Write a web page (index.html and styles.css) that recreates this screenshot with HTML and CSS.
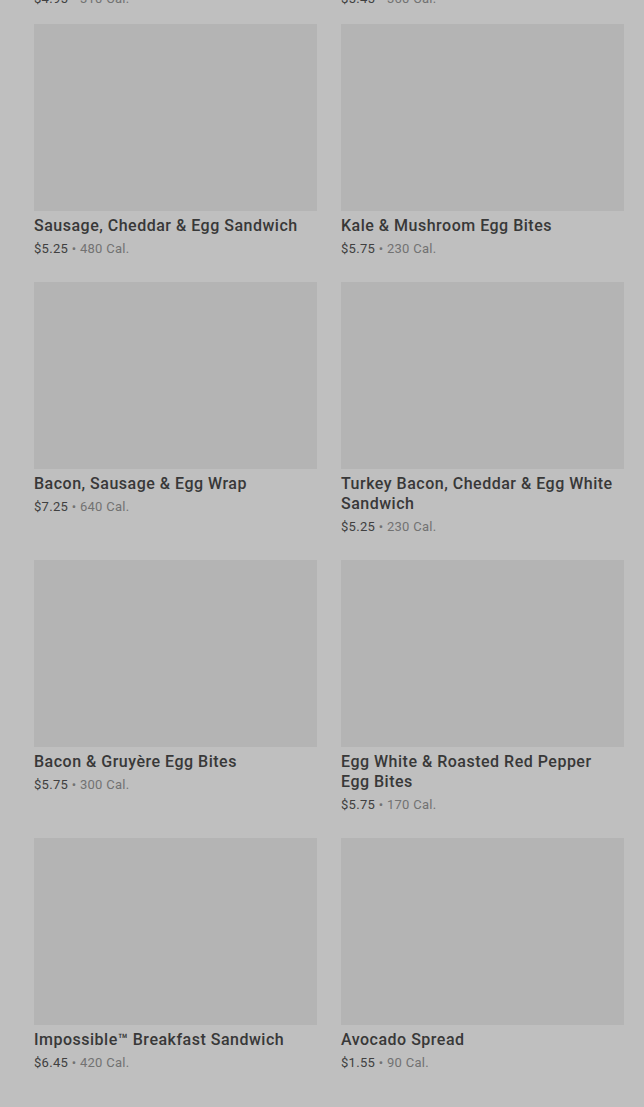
FILE: index.html
```html
<!DOCTYPE html>
<html>
<head>
  <meta charset="UTF-8">
  <link rel="stylesheet" href="styles.css">
</head>
<body>
  <div class="page">
    <div class="tail">
      <div class="price">$4.95 <span class="cal">&bull; 310 Cal.</span></div>
      <div class="price">$5.45 <span class="cal">&bull; 360 Cal.</span></div>
    </div>

    <div class="menu-grid">
      <div class="item">
        <div class="thumb"></div>
        <div class="name">Sausage, Cheddar &amp; Egg Sandwich</div>
        <div class="price">$5.25 <span class="cal">&bull; 480 Cal.</span></div>
      </div>
      <div class="item">
        <div class="thumb"></div>
        <div class="name">Kale &amp; Mushroom Egg Bites</div>
        <div class="price">$5.75 <span class="cal">&bull; 230 Cal.</span></div>
      </div>

      <div class="item">
        <div class="thumb"></div>
        <div class="name">Bacon, Sausage &amp; Egg Wrap</div>
        <div class="price">$7.25 <span class="cal">&bull; 640 Cal.</span></div>
      </div>
      <div class="item">
        <div class="thumb"></div>
        <div class="name">Turkey Bacon, Cheddar &amp; Egg White Sandwich</div>
        <div class="price">$5.25 <span class="cal">&bull; 230 Cal.</span></div>
      </div>

      <div class="item">
        <div class="thumb"></div>
        <div class="name">Bacon &amp; Gruyère Egg Bites</div>
        <div class="price">$5.75 <span class="cal">&bull; 300 Cal.</span></div>
      </div>
      <div class="item">
        <div class="thumb"></div>
        <div class="name">Egg White &amp; Roasted Red Pepper Egg Bites</div>
        <div class="price">$5.75 <span class="cal">&bull; 170 Cal.</span></div>
      </div>

      <div class="item">
        <div class="thumb"></div>
        <div class="name">Impossible™ Breakfast Sandwich</div>
        <div class="price">$6.45 <span class="cal">&bull; 420 Cal.</span></div>
      </div>
      <div class="item">
        <div class="thumb"></div>
        <div class="name">Avocado Spread</div>
        <div class="price">$1.55 <span class="cal">&bull; 90 Cal.</span></div>
      </div>
    </div>
  </div>
</body>
</html>
```

FILE: styles.css
```css
html, body {
  margin: 0;
  height: 100%;
  overflow: hidden;
  background-color: #bfbfbf;
}

body {
  font-family: Roboto, "Liberation Sans", sans-serif;
  color: #333;
}

.page {
  padding: 0 20px 0 34px;
}

.tail {
  display: grid;
  grid-template-columns: 1fr 1fr;
  column-gap: 24px;
  height: 20px;
  margin-top: -11px;
  margin-bottom: 15px;
}

.menu-grid {
  display: grid;
  grid-template-columns: 1fr 1fr;
  column-gap: 24px;
  row-gap: 23px;
  align-items: start;
}

.thumb {
  height: 187px;
  background-color: #b4b4b4;
}

.name {
  margin-top: 5px;
  font-size: 16px;
  line-height: 20px;
  font-weight: 500;
  letter-spacing: 0.5px;
  color: #383838;
}

.price {
  margin-top: 3px;
  font-size: 13px;
  line-height: 20px;
  letter-spacing: 0.3px;
  color: #404040;
}

.tail .price {
  margin-top: 0;
}

.cal {
  color: #727272;
}
```
